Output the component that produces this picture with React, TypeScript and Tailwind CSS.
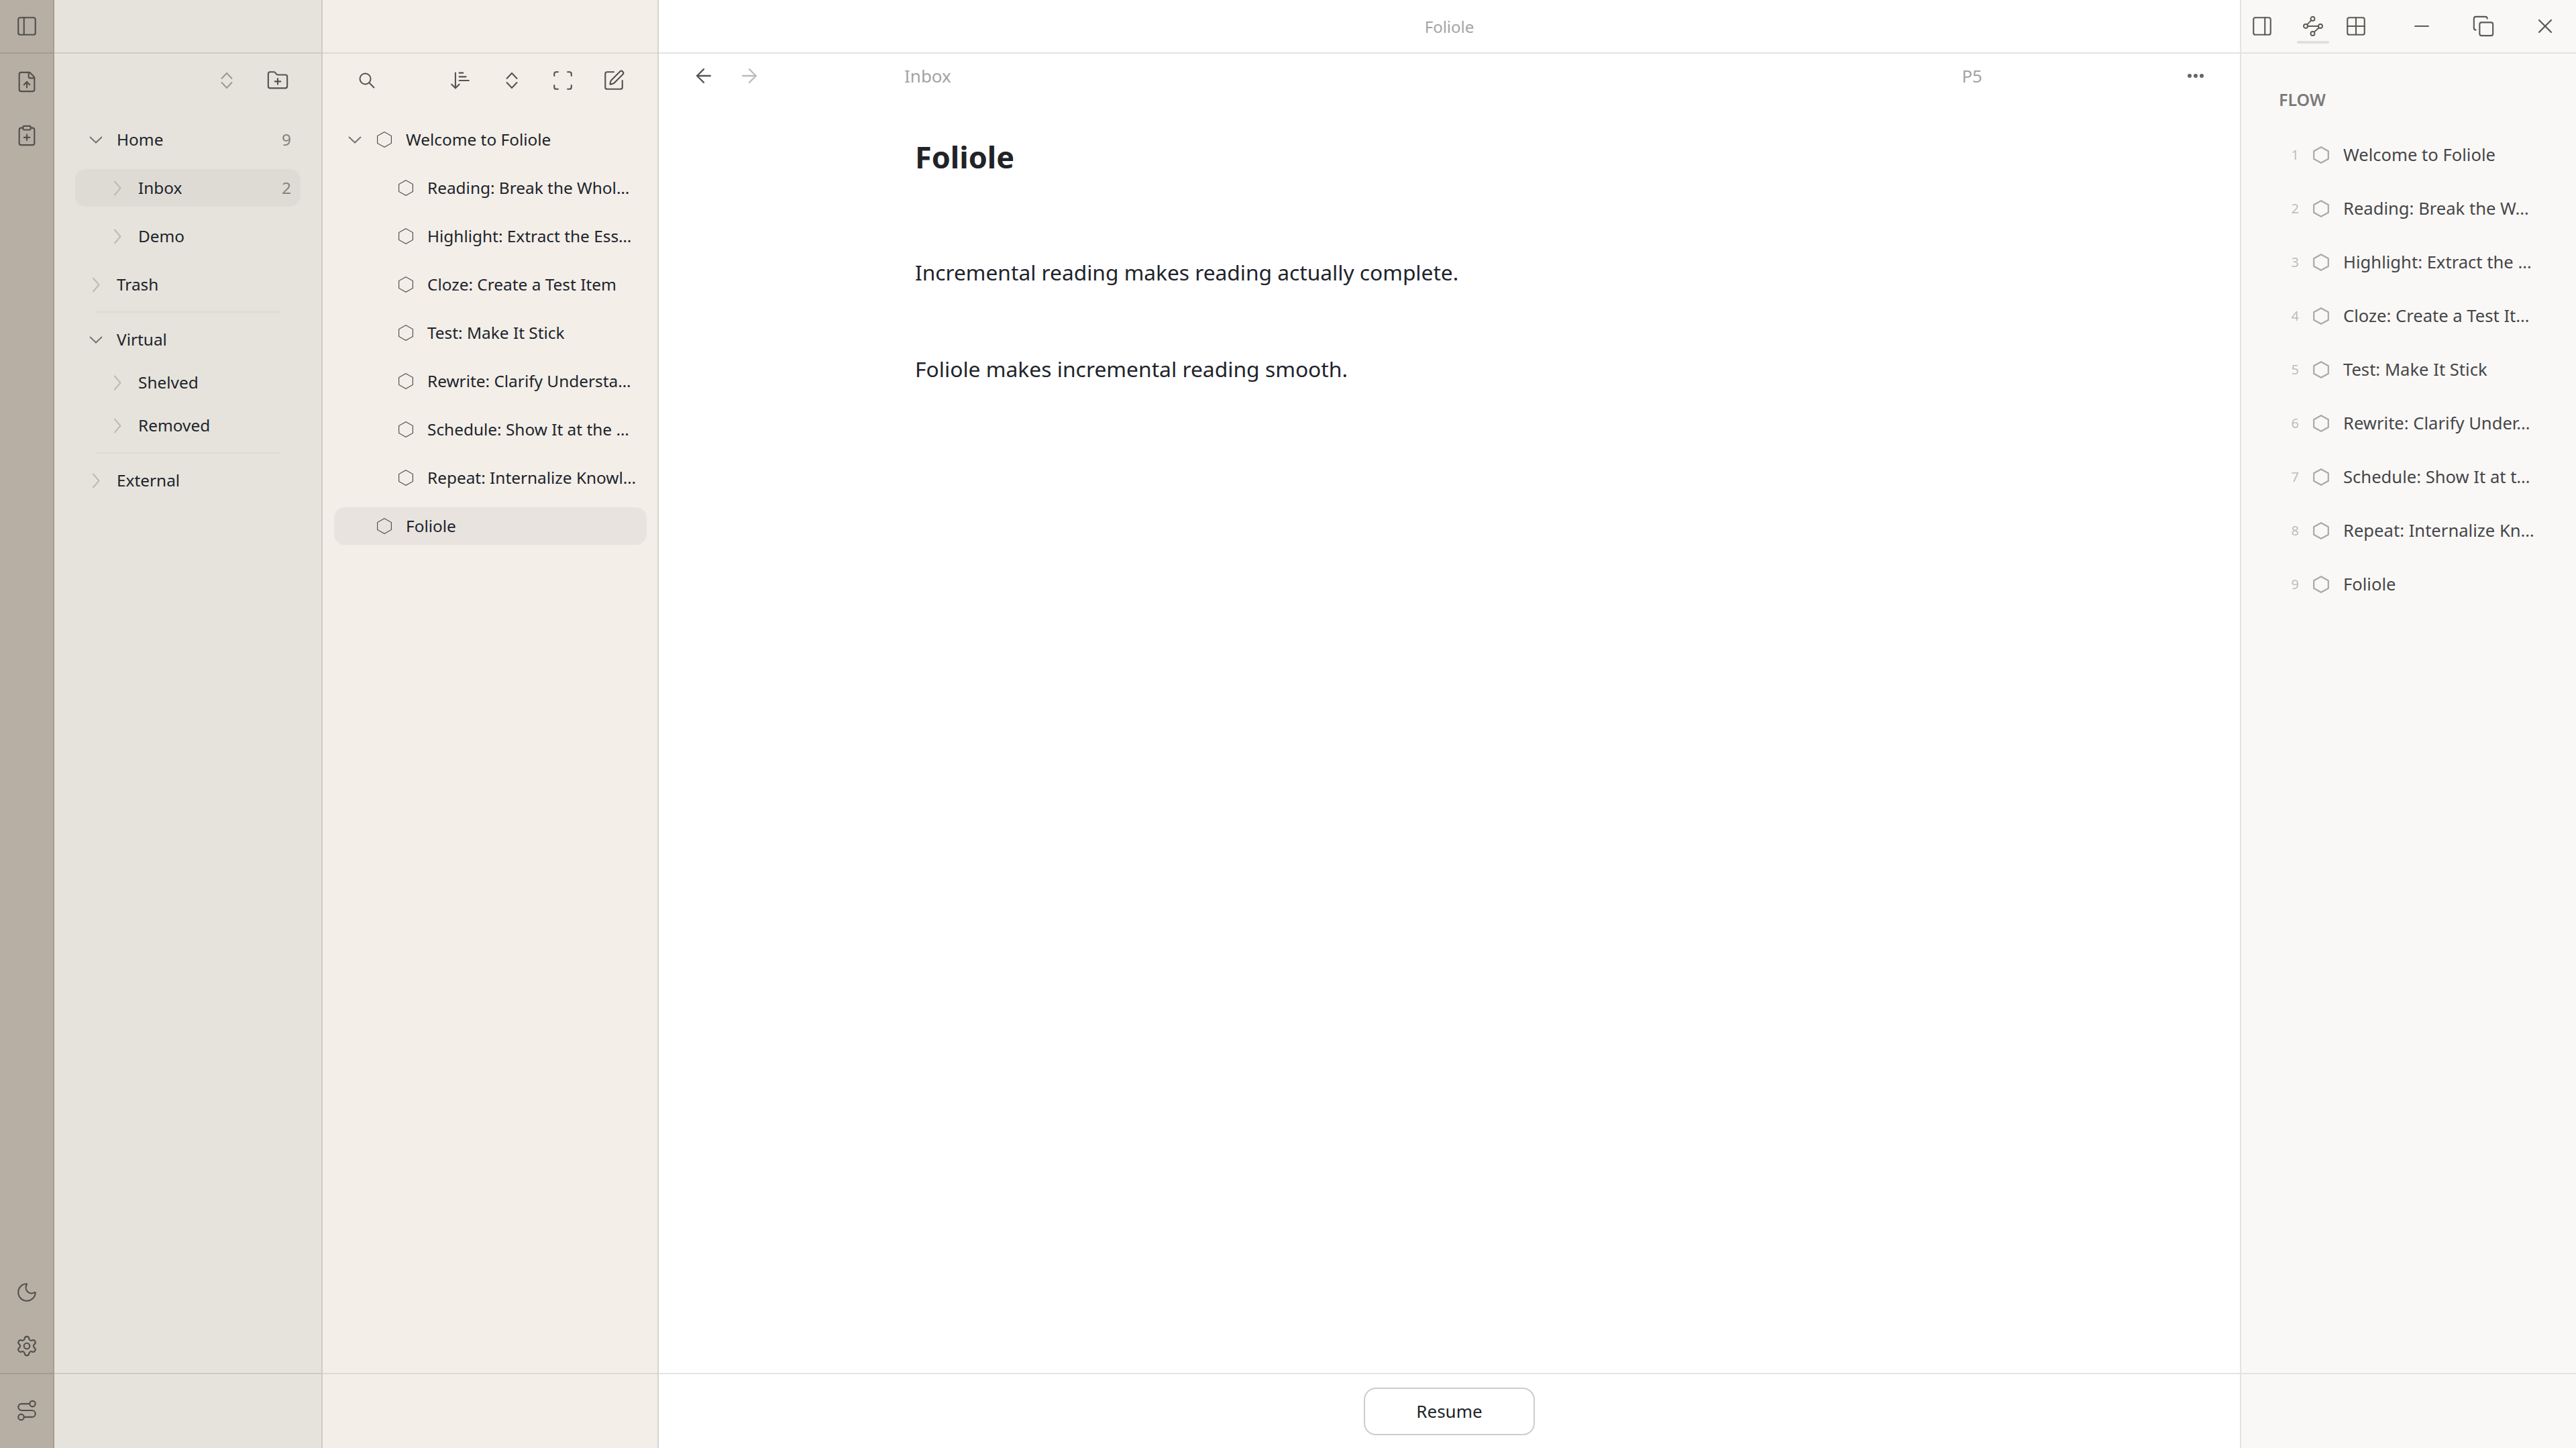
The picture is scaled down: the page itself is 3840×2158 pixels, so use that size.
import {
  ArrowDownNarrowWide,
  ArrowLeft,
  ArrowRight,
  ClipboardPlus,
  Copy,
  FileUp,
  FolderPlus,
  Grid2x2,
  Minus,
  Moon,
  PanelLeft,
  PanelRight,
  Route,
  Scan,
  Settings,
  SquarePen,
  X,
} from "lucide-react";

const tree = [
  { title: "Welcome to Foliole", level: 0, open: true },
  { title: "Reading: Break the Whol…", level: 1 },
  { title: "Highlight: Extract the Ess…", level: 1 },
  { title: "Cloze: Create a Test Item", level: 1 },
  { title: "Test: Make It Stick", level: 1 },
  { title: "Rewrite: Clarify Understa…", level: 1 },
  { title: "Schedule: Show It at the …", level: 1 },
  { title: "Repeat: Internalize Knowl…", level: 1 },
  { title: "Foliole", level: 0, selected: true },
];

const flow = [
  "Welcome to Foliole",
  "Reading: Break the W…",
  "Highlight: Extract the …",
  "Cloze: Create a Test It…",
  "Test: Make It Stick",
  "Rewrite: Clarify Under…",
  "Schedule: Show It at t…",
  "Repeat: Internalize Kn…",
  "Foliole",
];

function Hexagon() {
  return (
    <svg viewBox="0 0 22 24" className="h-[24px] w-[22px] shrink-0" fill="none" stroke="#55534f" strokeWidth="1.2">
      <path d="M11 .7 21.4 6.5v11L11 23.3.6 17.5v-11Z" />
    </svg>
  );
}

function FlowHexagon() {
  return (
    <svg viewBox="0 0 24 26" className="h-[26px] w-[24px] shrink-0" fill="none" stroke="#aaa9a7" strokeWidth="2.2">
      <path d="M12 1.3 22.8 7.2v11.6L12 24.7 1.2 18.8V7.2Z" />
    </svg>
  );
}

function Chevron({ open }: { open?: boolean }) {
  return (
    <span className="flex w-[32px] shrink-0 items-center justify-center">
      {open ? (
        <svg viewBox="0 0 20 11" className="h-[11px] w-[20px]" fill="none" stroke="#777571" strokeWidth="2">
          <path d="M1 1l9 8.5L19 1" />
        </svg>
      ) : (
        <svg viewBox="0 0 12 23" className="h-[23px] w-[12px]" fill="none" stroke="#bdbab4" strokeWidth="2">
          <path d="M1.5 1l9 10.5-9 10.5" />
        </svg>
      )}
    </span>
  );
}

function UpDown({ color }: { color: string }) {
  return (
    <svg viewBox="0 0 18 26" className="h-[26px] w-[18px]" fill="none" stroke={color} strokeWidth="2">
      <path d="M1 10.5 9 2l8 8.5M1 15.5l8 8.5 8-8.5" />
    </svg>
  );
}

function SearchIcon() {
  return (
    <svg viewBox="0 0 24 24" className="h-[24px] w-[24px]" fill="none" stroke="currentColor" strokeWidth="2">
      <circle cx="9.5" cy="9.5" r="8" />
      <path d="M15.2 15.2 23 23" />
    </svg>
  );
}

function FlowIcon() {
  return (
    <svg viewBox="0 0 30 30" className="h-[30px] w-[30px]" fill="none" stroke="#5c5a57" strokeWidth="1.9">
      <circle cx="14.5" cy="4" r="3" />
      <circle cx="4" cy="15" r="3" />
      <circle cx="26" cy="15" r="3" />
      <circle cx="14.5" cy="26" r="3" />
      <path d="M7 15h16M6 12.8l6.4-6.7M24 17.2l-7.4 6.7" />
    </svg>
  );
}

function FolderRow({
  label,
  level = 0,
  open,
  count,
  active,
  height = "h-[72px]",
}: {
  label: string;
  level?: number;
  open?: boolean;
  count?: number;
  active?: boolean;
  height?: string;
}) {
  return (
    <div className={`${height} flex items-center`}>
      <div
        className={`flex h-[56px] flex-1 items-center rounded-[16px] pr-[14px] ${
          level ? "pl-[47px]" : "pl-[15px]"
        } ${active ? "bg-[#dedbd5]" : ""}`}
      >
        <Chevron open={open} />
        <span className="ml-[15px] flex-1">{label}</span>
        {count !== undefined && <span className="text-[#85837f]">{count}</span>}
      </div>
    </div>
  );
}

export default function App() {
  return (
    <div className="flex h-screen w-screen overflow-hidden bg-white font-['Noto_Sans',sans-serif] text-[24.4px] text-[#20242b]">
      {/* icon rail */}
      <div className="flex w-[81px] shrink-0 flex-col border-r-2 border-[#a59c91] bg-[#b7aea4] text-[#52504e]">
        <div className="flex h-[80px] shrink-0 items-center justify-center border-b-2 border-[#a59c91]">
          <PanelLeft size={34} strokeWidth={1.5} />
        </div>
        <div className="flex flex-1 flex-col items-center pt-[25px]">
          <FileUp size={34} strokeWidth={1.5} />
          <span className="mt-[46px]">
            <ClipboardPlus size={34} strokeWidth={1.5} />
          </span>
          <span className="mt-auto">
            <Moon size={34} strokeWidth={1.5} />
          </span>
          <span className="mb-[23px] mt-[46px]">
            <Settings size={34} strokeWidth={1.5} />
          </span>
        </div>
        <div className="flex h-[112px] shrink-0 items-center justify-center border-t-2 border-[#a59c91] pb-[3px]">
          <Route size={34} strokeWidth={1.5} />
        </div>
      </div>

      {/* folders */}
      <div className="flex w-[400px] shrink-0 flex-col border-r-2 border-[#cfcbc4] bg-[#e6e3dc]">
        <div className="h-[80px] shrink-0 border-b-2 border-[#cfcbc4]" />
        <div className="flex-1 px-[31px]">
          <div className="flex h-[80px] items-center justify-end gap-[50px] pr-[17px] text-[#55534f]">
            <UpDown color="#9d9a95" />
            <FolderPlus size={34} strokeWidth={1.5} />
          </div>
          <div className="pt-[12px]">
            <FolderRow label="Home" open count={9} />
            <FolderRow label="Inbox" level={1} count={2} active />
            <FolderRow label="Demo" level={1} />
            <FolderRow label="Trash" />
            <div className="h-[14px] pt-[4px]">
              <div className="mx-[31px] h-[2px] bg-[#dedbd5]" />
            </div>
            <FolderRow label="Virtual" open height="h-[64px]" />
            <FolderRow label="Shelved" level={1} height="h-[64px]" />
            <FolderRow label="Removed" level={1} height="h-[64px]" />
            <div className="h-[18px] pt-[8px]">
              <div className="mx-[31px] h-[2px] bg-[#dedbd5]" />
            </div>
            <FolderRow label="External" height="h-[64px]" />
          </div>
        </div>
        <div className="h-[112px] shrink-0 border-t-2 border-[#cfcbc4]" />
      </div>

      {/* outline */}
      <div className="flex w-[501px] shrink-0 flex-col border-r-2 border-[#d6d3ce] bg-[#f3eee8]">
        <div className="h-[80px] shrink-0 border-b-2 border-[#dedad4]" />
        <div className="flex-1">
          <div className="flex h-[80px] items-center pl-[54px] text-[#55534f]">
            <SearchIcon />
            <span className="ml-[110px]">
              <ArrowDownNarrowWide size={34} strokeWidth={1.5} />
            </span>
            <span className="ml-[51px] flex">
              <UpDown color="#55534f" />
            </span>
            <span className="ml-[50px]">
              <Scan size={34} strokeWidth={1.5} />
            </span>
            <span className="ml-[42px]">
              <SquarePen size={34} strokeWidth={1.5} />
            </span>
          </div>
          <div className="pt-[12px]">
            {tree.map((item) => (
              <div key={item.title} className="flex h-[72px] items-center pl-[17px] pr-[16px]">
                <div
                  className={`flex h-[56px] w-full items-center rounded-[16px] pl-[15px] ${
                    item.selected ? "bg-[#e8e3df]" : ""
                  }`}
                >
                  <span className="w-[32px] shrink-0">{item.open && <Chevron open />}</span>
                  <span className={item.level ? "ml-[49px] flex" : "ml-[17px] flex"}>
                    <Hexagon />
                  </span>
                  <span className="ml-[21px] whitespace-nowrap">{item.title}</span>
                </div>
              </div>
            ))}
          </div>
        </div>
        <div className="h-[112px] shrink-0 border-t-2 border-[#dedad4]" />
      </div>

      {/* document */}
      <div className="flex min-w-0 flex-1 flex-col">
        <div className="flex h-[80px] shrink-0 items-center justify-center border-b-2 border-[#e3e3e3] pt-[2px] text-[24px] text-[#a4a4a4]">
          Foliole
        </div>
        <div className="flex-1">
          <div className="flex h-[66px] items-center pl-[50px] text-[#a3a3a3]">
            <ArrowLeft size={34} strokeWidth={1.6} className="text-[#555]" />
            <span className="ml-[34px]">
              <ArrowRight size={34} strokeWidth={1.6} className="text-[#bbb]" />
            </span>
            <span className="ml-[214px] flex-1 pt-[1px] text-[26px]">Inbox</span>
            <span className="pt-[1px] text-[26px]">P5</span>
            <span className="ml-[306px] mr-[54px] flex gap-[3px]">
              <span className="h-[6px] w-[6px] rounded-full bg-[#666]" />
              <span className="h-[6px] w-[6px] rounded-full bg-[#666]" />
              <span className="h-[6px] w-[6px] rounded-full bg-[#666]" />
            </span>
          </div>
          <div className="pl-[382px]">
            <h1 className="pt-[52px] text-[45px] font-bold leading-[72px] text-[#222327]">Foliole</h1>
            <p className="mt-[109px] text-[31.7px] leading-[54px]">
              Incremental reading makes reading actually complete.
            </p>
            <p className="mt-[90px] text-[31.8px] leading-[54px]">Foliole makes incremental reading smooth.</p>
          </div>
        </div>
        <div className="flex h-[112px] shrink-0 items-center justify-center border-t-2 border-[#e3e3e3]">
          <button className="h-[71px] w-[255px] rounded-[18px] border-2 border-[#cdcdcd] bg-white text-[26px]">
            Resume
          </button>
        </div>
      </div>

      {/* flow */}
      <div className="flex w-[501px] shrink-0 flex-col border-l-2 border-[#e3e3e3] bg-[#faf8f6]">
        <div className="flex h-[80px] shrink-0 items-center border-b-2 border-[#e3e3e3] pl-[14px] text-[#5c5a57]">
          <PanelRight size={34} strokeWidth={1.5} />
          <span className="relative ml-[35px] flex w-[48px] justify-center">
            <FlowIcon />
            <span className="absolute -bottom-[11px] h-[4px] w-[48px] rounded-full bg-[#e0dfdd]" />
          </span>
          <span className="ml-[23px]">
            <Grid2x2 size={34} strokeWidth={1.5} />
          </span>
          <span className="ml-[64px]">
            <Minus size={34} strokeWidth={1.5} />
          </span>
          <span className="ml-[58px]">
            <Copy size={34} strokeWidth={1.5} />
          </span>
          <span className="ml-[57px]">
            <X size={36} strokeWidth={1.5} />
          </span>
        </div>
        <div className="flex-1 pl-[56px]">
          <div className="flex h-[87px] items-end text-[25px] font-semibold text-[#7a7a7a]">FLOW</div>
          <div className="pt-[24px] text-[25.6px]">
            {flow.map((title, i) => (
              <div key={title} className="flex h-[80px] items-center text-[#45464a]">
                <span className="w-[30px] shrink-0 text-right text-[20px] text-[#bdbdbb]">{i + 1}</span>
                <span className="ml-[21px] flex">
                  <FlowHexagon />
                </span>
                <span className="ml-[21px] whitespace-nowrap">{title}</span>
              </div>
            ))}
          </div>
        </div>
        <div className="h-[112px] shrink-0 border-t-2 border-[#e3e3e3]" />
      </div>
    </div>
  );
}
